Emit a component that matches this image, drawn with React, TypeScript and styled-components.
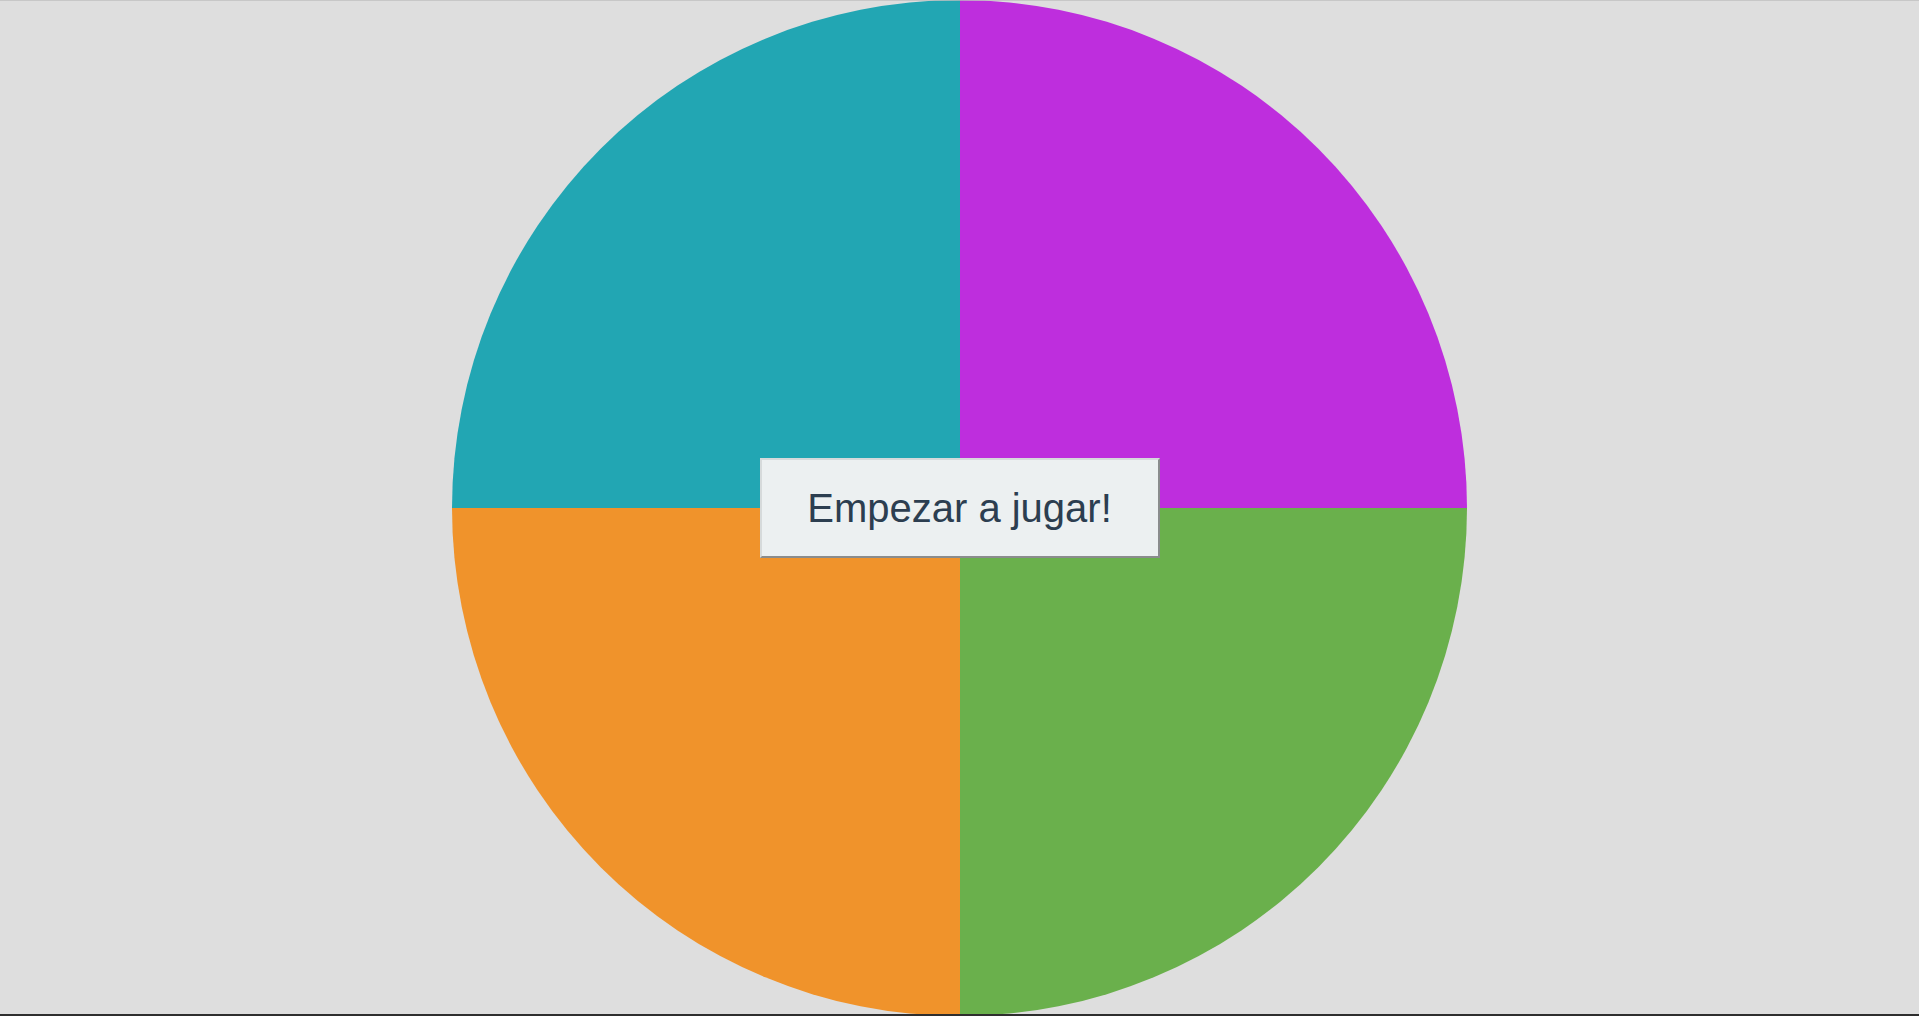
import React from "react";
import styled, { createGlobalStyle } from "styled-components";

const GlobalStyle = createGlobalStyle`
  html, body {
    margin: 0;
    padding: 0;
    background: #dedede;
    font-family: "Liberation Sans", Arial, sans-serif;
    overflow: hidden;
  }
  * { box-sizing: border-box; }
`;

const Page = styled.div`
  height: 1016px;
  display: flex;
  justify-content: center;
  align-items: flex-start;
  background: #dedede;
  position: relative;

  &::before {
    content: "";
    position: absolute;
    left: 0;
    right: 0;
    top: 0;
    height: 1px;
    background: rgba(190, 190, 190, 0.7);
    z-index: 3;
  }

  &::after {
    content: "";
    position: absolute;
    left: 0;
    right: 0;
    bottom: 0;
    height: 2px;
    background: #2e2e2e;
    z-index: 3;
  }
`;

const Board = styled.div`
  width: 1015px;
  height: 1016px;
  border-radius: 50%;
  overflow: hidden;
  display: grid;
  grid-template-columns: 1fr 1fr;
  grid-template-rows: 1fr 1fr;
  position: relative;
`;

const Quadrant = styled.button<{ $color: string }>`
  border: none;
  padding: 0;
  margin: 0;
  background: ${(p) => p.$color};
  cursor: pointer;
`;

const StartButton = styled.button`
  position: absolute;
  left: 50%;
  top: 50%;
  transform: translate(-50%, -50%);
  width: 400px;
  height: 100px;
  background: #ecf0f1;
  color: #2c3e50;
  font-family: "Liberation Sans", Arial, sans-serif;
  font-size: 40px;
  border-style: solid;
  border-width: 2px;
  border-color: #d6dadb #8a8c8d #8a8c8d #d6dadb;
  padding: 0;
  cursor: pointer;
  z-index: 2;
`;

const quadrants = [
  { id: "teal", color: "#22a6b3" },
  { id: "purple", color: "#be2edd" },
  { id: "orange", color: "#f0932b" },
  { id: "green", color: "#6ab04c" },
];

export default function App() {
  return (
    <>
      <GlobalStyle />
      <Page>
        <Board>
          {quadrants.map((q) => (
            <Quadrant key={q.id} $color={q.color} aria-label={q.id} />
          ))}
          <StartButton>Empezar a jugar!</StartButton>
        </Board>
      </Page>
    </>
  );
}
